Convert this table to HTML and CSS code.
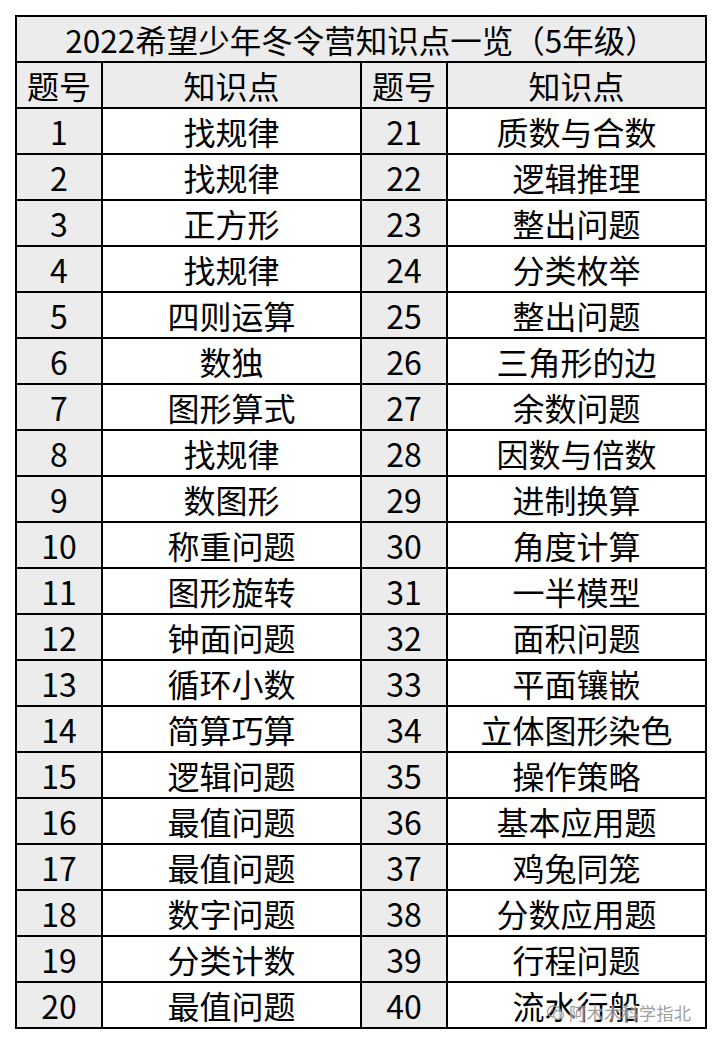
FILE: index.html
```html
<!DOCTYPE html>
<html lang="zh">
<head>
<meta charset="utf-8">
<link rel="stylesheet" href="styles.css">
</head>
<body>
<div class="page">
<table class="sheet">
<colgroup><col class="c-no"><col class="c-kp"><col class="c-no"><col class="c-kp"></colgroup>
<tr><td class="title" colspan="4">2022希望少年冬令营知识点一览（5年级）</td></tr>
<tr class="head"><td>题号</td><td>知识点</td><td>题号</td><td>知识点</td></tr>
<tr><td class="no">1</td><td>找规律</td><td class="no">21</td><td>质数与合数</td></tr>
<tr><td class="no">2</td><td>找规律</td><td class="no">22</td><td>逻辑推理</td></tr>
<tr><td class="no">3</td><td>正方形</td><td class="no">23</td><td>整出问题</td></tr>
<tr><td class="no">4</td><td>找规律</td><td class="no">24</td><td>分类枚举</td></tr>
<tr><td class="no">5</td><td>四则运算</td><td class="no">25</td><td>整出问题</td></tr>
<tr><td class="no">6</td><td>数独</td><td class="no">26</td><td>三角形的边</td></tr>
<tr><td class="no">7</td><td>图形算式</td><td class="no">27</td><td>余数问题</td></tr>
<tr><td class="no">8</td><td>找规律</td><td class="no">28</td><td>因数与倍数</td></tr>
<tr><td class="no">9</td><td>数图形</td><td class="no">29</td><td>进制换算</td></tr>
<tr><td class="no">10</td><td>称重问题</td><td class="no">30</td><td>角度计算</td></tr>
<tr><td class="no">11</td><td>图形旋转</td><td class="no">31</td><td>一半模型</td></tr>
<tr><td class="no">12</td><td>钟面问题</td><td class="no">32</td><td>面积问题</td></tr>
<tr><td class="no">13</td><td>循环小数</td><td class="no">33</td><td>平面镶嵌</td></tr>
<tr><td class="no">14</td><td>简算巧算</td><td class="no">34</td><td>立体图形染色</td></tr>
<tr><td class="no">15</td><td>逻辑问题</td><td class="no">35</td><td>操作策略</td></tr>
<tr><td class="no">16</td><td>最值问题</td><td class="no">36</td><td>基本应用题</td></tr>
<tr><td class="no">17</td><td>最值问题</td><td class="no">37</td><td>鸡兔同笼</td></tr>
<tr><td class="no">18</td><td>数字问题</td><td class="no">38</td><td>分数应用题</td></tr>
<tr><td class="no">19</td><td>分类计数</td><td class="no">39</td><td>行程问题</td></tr>
<tr><td class="no">20</td><td>最值问题</td><td class="no">40</td><td>流水行船</td></tr>
</table>
<div class="mark">
<svg class="mark-icon" viewBox="0 0 20 20" width="20" height="20">
<ellipse cx="8" cy="8.5" rx="6.5" ry="5.5" fill="none" stroke="#9a9a9a" stroke-width="1.4"/>
<ellipse cx="12.5" cy="12" rx="5" ry="4.2" fill="rgba(255,255,255,0.8)" stroke="#9a9a9a" stroke-width="1.4"/>
<circle cx="6" cy="7" r="0.9" fill="#9a9a9a"/>
<circle cx="10" cy="7" r="0.9" fill="#9a9a9a"/>
</svg>
<span class="mark-text">阿木木科学指北</span>
</div>
</div>
</body>
</html>
```
FILE: styles.css
```css
html, body {
  margin: 0;
  padding: 0;
  background: #fff;
}
.page {
  position: relative;
  padding: 15px 0 0 15px;
  width: 720px;
  height: 1044px;
  box-sizing: border-box;
}
.sheet {
  border-collapse: collapse;
  table-layout: fixed;
  width: 690px;
  font-family: "Noto Sans CJK SC", "Noto Sans", sans-serif;
  font-size: 32px;
  color: #000;
}
.c-no { width: 86px; }
.c-kp { width: 259px; }
.sheet td {
  border: 2px solid #000;
  height: 44px;
  padding: 0;
  text-align: center;
  vertical-align: middle;
  line-height: 44px;
  white-space: nowrap;
  overflow: hidden;
}
.sheet .title {
  background: #ececec;
  font-size: 31.5px;
}
.sheet .head td {
  background: #ececec;
}
.sheet td.no {
  background: #ececec;
}
.mark {
  position: absolute;
  left: 546px;
  top: 1000px;
  display: flex;
  align-items: center;
  gap: 3px;
  opacity: 0.85;
}
.mark-icon {
  display: block;
}
.mark-text {
  font-family: "Noto Sans CJK SC", sans-serif;
  font-size: 17px;
  color: #8f8f8f;
  letter-spacing: 0.5px;
  text-shadow: 0 0 2px #fff, 0 0 2px #fff;
}
```
